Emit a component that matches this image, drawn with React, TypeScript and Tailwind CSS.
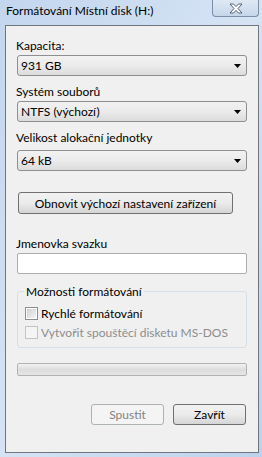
import React from 'react';

const font = { fontFamily: 'Lato, "Noto Sans", sans-serif' };

const Combo: React.FC<{ value: string }> = ({ value }) => (
  <div className="flex items-center h-[21px] w-[230px] rounded-[3px] border border-[#8e8f8f] bg-gradient-to-b from-[#f2f2f2] via-[#ebebeb] to-[#dcdcdc] pl-[3px] pr-[4px]">
    <span className="flex-1 text-[12px] leading-[15px] text-black">{value}</span>
    <svg width="7" height="4" viewBox="0 0 7 4" className="mr-[1px]">
      <path d="M0 0 H7 L3.5 4 Z" fill="#000" />
    </svg>
  </div>
);

const Label: React.FC<{ children: React.ReactNode; className?: string }> = ({ children, className }) => (
  <div className={`text-[12px] leading-[15px] text-black ${className ?? ''}`}>{children}</div>
);

const Checkbox: React.FC<{ label: string; disabled?: boolean; className?: string }> = ({ label, disabled, className }) => (
  <div className={`flex items-center gap-[3px] ${className ?? ''}`}>
    <div
      className={`w-[13px] h-[13px] border ${
        disabled ? 'border-[#c4c4c4] bg-[#f4f4f4]' : 'border-[#8e8f8f] bg-white'
      } flex items-center justify-center`}
    >
      {!disabled && <div className="w-[9px] h-[9px] bg-gradient-to-br from-[#cbcfd5] to-[#f6f6f6]" />}
    </div>
    <span className={`text-[12px] leading-[15px] ${disabled ? 'text-[#8d8d8d]' : 'text-black'}`}>{label}</span>
  </div>
);

const Button: React.FC<{ children: React.ReactNode; disabled?: boolean; className?: string }> = ({
  children,
  disabled,
  className,
}) => (
  <div
    className={`flex items-center justify-center h-[21px] rounded-[3px] border text-[12px] leading-[15px] ${
      disabled
        ? 'border-[#adb2b5] bg-[#f4f4f4] text-[#838383]'
        : 'border-[#707070] bg-gradient-to-b from-[#f2f2f2] via-[#ebebeb] to-[#d5d5d5] text-black'
    } ${className ?? ''}`}
  >
    {children}
  </div>
);

export default function App() {
  return (
    <div
      style={font}
      className="w-[262px] h-[457px] overflow-hidden flex flex-col bg-gradient-to-br from-[#c3d6ee] via-[#d5e3f4] to-[#bcd2ec]"
    >
      {/* Title bar */}
      <div className="flex h-[25px] shrink-0">
        <div className="flex-1 pl-[6px] pt-[3px] text-[12px] leading-[15px] text-black">
          Formátování Místní disk (H:)
        </div>
        <div className="mr-[3px] w-[47px] h-[17px] rounded-b-[4px] border border-t-0 border-[#7c8ea8] bg-gradient-to-b from-[#dfe9f5] to-[#c6d6ea] flex items-center justify-center">
          <svg width="14" height="11" viewBox="0 0 14 11">
            <path
              d="M1 1 H4.5 L7 3.6 L9.5 1 H13 L9 5.5 L13 10 H9.5 L7 7.4 L4.5 10 H1 L5 5.5 Z"
              fill="#ffffff"
              stroke="#53606f"
              strokeWidth="1"
              strokeLinejoin="round"
            />
          </svg>
        </div>
      </div>

      {/* Client area */}
      <div className="ml-[5px] w-[254px] h-[428px] border border-[#6f7680] bg-[#f0f0f0] flex flex-col pl-[10px]">
        <Label className="mt-[12px]">Kapacita:</Label>
        <div className="mt-[2px] ml-[1px]">
          <Combo value="931 GB" />
        </div>

        <Label className="mt-[8px]">Systém souborů</Label>
        <div className="mt-[2px] ml-[1px]">
          <Combo value="NTFS (výchozí)" />
        </div>

        <Label className="mt-[8px]">Velikost alokační jednotky</Label>
        <div className="mt-[5px] ml-[1px]">
          <Combo value="64 kB" />
        </div>

        <Button className="mt-[21px] ml-[2px] w-[215px] h-[22px]">Obnovit výchozí nastavení zařízení</Button>

        <Label className="mt-[22px]">Jmenovka svazku</Label>
        <div className="mt-[2px] ml-[1px] w-[230px] h-[21px] border border-[#abadb3] bg-white rounded-[2px]" />

        {/* Group box */}
        <div className="relative mt-[17px] ml-[1px] w-[230px] h-[57px] rounded-[3px] border border-[#d5dfe5] pl-[7px] pt-[14px]">
          <div className="absolute -top-[8px] left-[6px] px-[2px] bg-[#f0f0f0] text-[12px] leading-[15px] text-black">
            Možnosti formátování
          </div>
          <Checkbox label="Rychlé formátování" />
          <Checkbox label="Vytvořit spouštěcí disketu MS-DOS" disabled className="mt-[4px]" />
        </div>

        {/* Progress bar */}
        <div className="mt-[15px] ml-[1px] w-[230px] h-[13px] rounded-[2px] border border-[#b2b2b2] bg-gradient-to-b from-[#f3f3f3] via-[#dddddd] to-[#e6e6e6]" />

        <div className="mt-[28px] flex gap-[9px] ml-[75px]">
          <Button disabled className="w-[73px]">
            Spustit
          </Button>
          <Button className="w-[73px]">Zavřít</Button>
        </div>
      </div>
    </div>
  );
}
